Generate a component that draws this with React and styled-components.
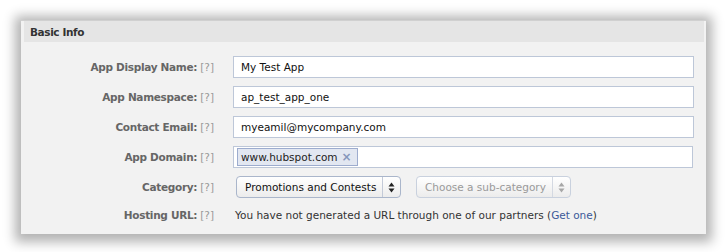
import React from "react";
import styled, { createGlobalStyle } from "styled-components";

const Global = createGlobalStyle`
  html, body { margin: 0; padding: 0; background: #ffffff; }
  body { font-family: "DejaVu Sans", "Noto Sans", sans-serif; }
`;

const Page = styled.div`
  box-sizing: border-box;
  padding: 20px 21px 18px 21px;
  width: 727px;
  height: 252px;
  overflow: hidden;
`;

const Panel = styled.section`
  width: 685px;
  height: 214px;
  box-sizing: border-box;
  background: #f2f2f2;
  box-shadow: 0 2px 11px 6px rgba(0, 0, 0, 0.3);
  border-top: 1px solid #d0d0d0;
  display: flex;
  flex-direction: column;
`;

const Header = styled.h2`
  margin: 0 2px 0 3px;
  height: 21px;
  display: flex;
  align-items: center;
  padding-left: 6px;
  background: #e5e5e5;
  color: #333333;
  font-size: 10.5px;
  font-weight: bold;
  letter-spacing: -0.4px;
`;

const Body = styled.div`
  display: grid;
  grid-template-columns: 193px 461px;
  column-gap: 19px;
  row-gap: 8px;
  padding-top: 14px;
`;

const Label = styled.div`
  display: flex;
  align-items: center;
  justify-content: flex-end;
  gap: 3px;
  height: ${(p) => (p.$short ? "18px" : "22px")};
  color: #666666;
  font-size: 10.5px;
  font-weight: bold;
  letter-spacing: -0.3px;
  white-space: nowrap;
`;

const Help = styled.span`
  color: #999999;
  font-weight: normal;
  letter-spacing: 0;
`;

const TextInput = styled.div`
  box-sizing: border-box;
  height: 22px;
  width: ${(p) => p.$width || "461px"};
  border: 1px solid #bdc7d8;
  background: #ffffff;
  display: flex;
  align-items: center;
  padding: ${(p) => (p.$tokens ? "0 3px" : "0 7px")};
  color: #111111;
  font-size: 10.5px;
`;

const Token = styled.span`
  box-sizing: border-box;
  height: 18px;
  display: inline-flex;
  align-items: center;
  gap: 4px;
  padding: 0 5px 0 3px;
  background: #e2e7f1;
  border: 1px solid #9dacce;
  color: #222222;
  font-size: 10.5px;
`;

const TokenRemove = styled.span`
  color: #8596bb;
  font-size: 12px;
  font-weight: bold;
  line-height: 1;
`;

const SelectRow = styled.div`
  display: flex;
  align-items: center;
  gap: 15px;
  padding-left: 3px;
`;

const SelectBox = styled.div`
  box-sizing: border-box;
  height: 22px;
  width: ${(p) => p.$width};
  display: flex;
  align-items: stretch;
  border: 1px solid ${(p) => (p.$disabled ? "#c9d1de" : "#aab6cb")};
  border-radius: 4px;
  background: linear-gradient(#ffffff, #ececec);
  color: ${(p) => (p.$disabled ? "#9a9a9a" : "#111111")};
  font-size: 10.5px;
`;

const SelectText = styled.span`
  flex: 1;
  display: flex;
  align-items: center;
  padding-left: 8px;
  white-space: nowrap;
`;

const SelectArrows = styled.span`
  width: 17px;
  border-left: 1px solid ${(p) => (p.$disabled ? "#d4d9e2" : "#c3cad8")};
  display: flex;
  align-items: center;
  justify-content: center;
`;

const HostingText = styled.div`
  height: 18px;
  display: flex;
  align-items: center;
  padding-left: 2px;
  color: #333333;
  font-size: 10.5px;
  white-space: nowrap;
`;

const Link = styled.a`
  color: #3b5998;
  text-decoration: none;
`;

function Arrows({ color }) {
  return (
    <svg width="7" height="11" viewBox="0 0 7 11">
      <path d="M3.5 0.5 L6.5 4.5 H0.5 Z" fill={color} />
      <path d="M3.5 10.5 L6.5 6.5 H0.5 Z" fill={color} />
    </svg>
  );
}

function Select({ value, width, disabled }) {
  return (
    <SelectBox $width={width} $disabled={disabled}>
      <SelectText>{value}</SelectText>
      <SelectArrows $disabled={disabled}>
        <Arrows color={disabled ? "#a8a8a8" : "#222222"} />
      </SelectArrows>
    </SelectBox>
  );
}

function FieldLabel({ children, short }) {
  return (
    <Label $short={short}>
      {children}
      <Help>[?]</Help>
    </Label>
  );
}

export default function App() {
  return (
    <>
      <Global />
      <Page>
        <Panel>
          <Header>Basic Info</Header>
          <Body>
            <FieldLabel>App Display Name:</FieldLabel>
            <TextInput>My Test App</TextInput>

            <FieldLabel>App Namespace:</FieldLabel>
            <TextInput>ap_test_app_one</TextInput>

            <FieldLabel>Contact Email:</FieldLabel>
            <TextInput>myeamil@mycompany.com</TextInput>

            <FieldLabel>App Domain:</FieldLabel>
            <TextInput $tokens $width="460px">
              <Token>
                www.hubspot.com
                <TokenRemove>×</TokenRemove>
              </Token>
            </TextInput>

            <FieldLabel>Category:</FieldLabel>
            <SelectRow>
              <Select value="Promotions and Contests" width="165px" />
              <Select value="Choose a sub-category" width="155px" disabled />
            </SelectRow>

            <FieldLabel short>Hosting URL:</FieldLabel>
            <HostingText>
              You have not generated a URL through one of our partners (
              <Link href="#">Get one</Link>)
            </HostingText>
          </Body>
        </Panel>
      </Page>
    </>
  );
}
